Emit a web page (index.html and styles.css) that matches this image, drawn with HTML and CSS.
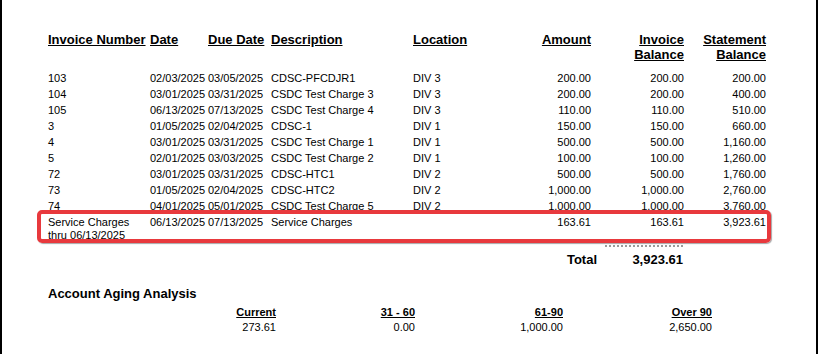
FILE: index.html
```html
<!DOCTYPE html>
<html>
<head>
<meta charset="utf-8">
<link rel="stylesheet" href="styles.css">
</head>
<body>
<div class="page">
  <div class="row head">
    <div>Invoice Number</div>
    <div>Date</div>
    <div>Due Date</div>
    <div>Description</div>
    <div>Location</div>
    <div class="r">Amount</div>
    <div class="r">Invoice<br>Balance</div>
    <div class="r">Statement<br>Balance</div>
  </div>

  <div class="rows">
    <div class="row"><div>103</div><div>02/03/2025</div><div>03/05/2025</div><div>CDSC-PFCDJR1</div><div>DIV 3</div><div class="r">200.00</div><div class="r">200.00</div><div class="r">200.00</div></div>
    <div class="row"><div>104</div><div>03/01/2025</div><div>03/31/2025</div><div>CSDC Test Charge 3</div><div>DIV 3</div><div class="r">200.00</div><div class="r">200.00</div><div class="r">400.00</div></div>
    <div class="row"><div>105</div><div>06/13/2025</div><div>07/13/2025</div><div>CSDC Test Charge 4</div><div>DIV 3</div><div class="r">110.00</div><div class="r">110.00</div><div class="r">510.00</div></div>
    <div class="row"><div>3</div><div>01/05/2025</div><div>02/04/2025</div><div>CDSC-1</div><div>DIV 1</div><div class="r">150.00</div><div class="r">150.00</div><div class="r">660.00</div></div>
    <div class="row"><div>4</div><div>03/01/2025</div><div>03/31/2025</div><div>CSDC Test Charge 1</div><div>DIV 1</div><div class="r">500.00</div><div class="r">500.00</div><div class="r">1,160.00</div></div>
    <div class="row"><div>5</div><div>02/01/2025</div><div>03/03/2025</div><div>CSDC Test Charge 2</div><div>DIV 1</div><div class="r">100.00</div><div class="r">100.00</div><div class="r">1,260.00</div></div>
    <div class="row"><div>72</div><div>03/01/2025</div><div>03/31/2025</div><div>CDSC-HTC1</div><div>DIV 2</div><div class="r">500.00</div><div class="r">500.00</div><div class="r">1,760.00</div></div>
    <div class="row"><div>73</div><div>01/05/2025</div><div>02/04/2025</div><div>CDSC-HTC2</div><div>DIV 2</div><div class="r">1,000.00</div><div class="r">1,000.00</div><div class="r">2,760.00</div></div>
    <div class="row"><div>74</div><div>04/01/2025</div><div>05/01/2025</div><div>CSDC Test Charge 5</div><div>DIV 2</div><div class="r">1,000.00</div><div class="r">1,000.00</div><div class="r">3,760.00</div></div>
    <div class="row hl"><div class="two">Service Charges<br>thru 06/13/2025</div><div>06/13/2025</div><div>07/13/2025</div><div>Service Charges</div><div></div><div class="r">163.61</div><div class="r">163.61</div><div class="r">3,923.61</div></div>
  </div>

  <div class="total">
    <div class="total-label">Total</div>
    <div class="total-value">3,923.61</div>
  </div>

  <div class="aging-title">Account Aging Analysis</div>
  <div class="aging aging-head">
    <div>Current</div><div>31 - 60</div><div>61-90</div><div>Over 90</div>
  </div>
  <div class="aging">
    <div>273.61</div><div>0.00</div><div>1,000.00</div><div>2,650.00</div>
  </div>
</div>
</body>
</html>
```

FILE: styles.css
```css
* { box-sizing: border-box; }
html, body { margin: 0; padding: 0; background: #fff; }
body { font-family: "Liberation Sans", Arial, sans-serif; color: #000; }

.page {
  width: 818px;
  height: 354px;
  border-left: 2px solid #000;
  border-right: 2px solid #000;
  padding: 32px 0 0 46px;
  overflow: hidden;
}

.row {
  display: grid;
  grid-template-columns: 102px 58px 63px 142px 100px 78px 93px 82px;
  width: 718px;
  font-size: 11px;
  line-height: 16px;
  white-space: nowrap;
}
.row .r { text-align: right; }

.head {
  font-size: 13px;
  font-weight: bold;
  line-height: 15px;
  text-decoration: underline;
  text-underline-offset: 1px;
}

.rows { margin-top: 8px; }

.row .two {
  line-height: 12.5px;
  padding-top: 2px;
}

.hl { position: relative; }
.hl::after {
  content: "";
  position: absolute;
  left: -11px;
  right: -5px;
  top: -4px;
  bottom: -2px;
  border: 4px solid #e8393d;
  border-radius: 5px;
  box-shadow: 1px 1px 1px rgba(0, 0, 0, 0.35);
  pointer-events: none;
}

.total {
  display: flex;
  margin-top: 4px;
  font-size: 13px;
  font-weight: bold;
  line-height: 16px;
}
.total-label {
  width: 549px;
  text-align: right;
  border-top: 2px solid transparent;
  padding-top: 4.5px;
}
.total-value {
  margin-left: 8px;
  width: 78px;
  text-align: right;
  border-top: 2px dotted #9a9a9a;
  padding-top: 4.5px;
}

.aging-title {
  margin-top: 18px;
  font-size: 13px;
  font-weight: bold;
  line-height: 16px;
}
.aging {
  display: grid;
  grid-template-columns: 228px 139px 148px 149px;
  font-size: 11px;
  line-height: 15px;
  text-align: right;
}
.aging-head {
  margin-top: 3px;
  font-weight: bold;
  text-decoration: underline;
}
```
